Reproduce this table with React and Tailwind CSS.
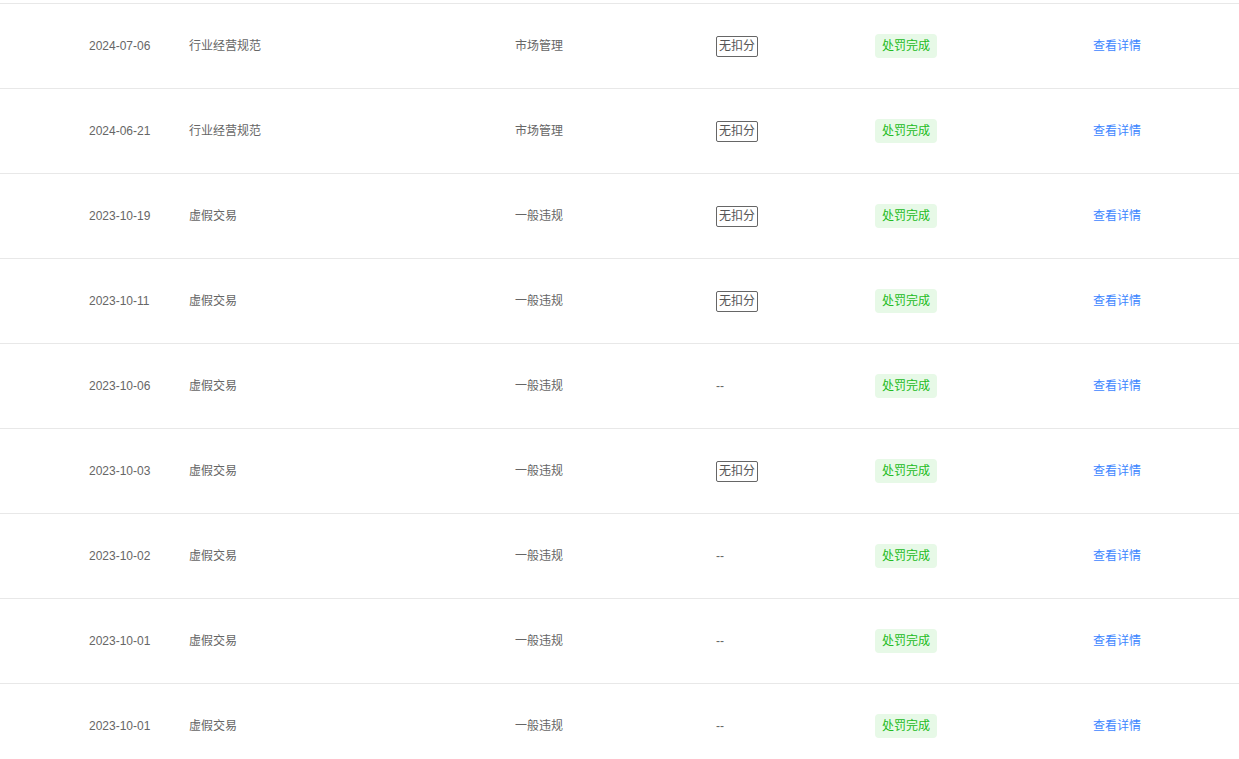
const rows = [
  { date: "2024-07-06", type: "行业经营规范", cat: "市场管理", deduct: true },
  { date: "2024-06-21", type: "行业经营规范", cat: "市场管理", deduct: true },
  { date: "2023-10-19", type: "虚假交易", cat: "一般违规", deduct: true },
  { date: "2023-10-11", type: "虚假交易", cat: "一般违规", deduct: true },
  { date: "2023-10-06", type: "虚假交易", cat: "一般违规", deduct: false },
  { date: "2023-10-03", type: "虚假交易", cat: "一般违规", deduct: true },
  { date: "2023-10-02", type: "虚假交易", cat: "一般违规", deduct: false },
  { date: "2023-10-01", type: "虚假交易", cat: "一般违规", deduct: false },
  { date: "2023-10-01", type: "虚假交易", cat: "一般违规", deduct: false },
];

export default function App() {
  return (
    <div
      className="h-[759px] overflow-hidden bg-white text-[12px] text-[#666]"
      style={{ fontFamily: '"Liberation Sans", "Noto Sans CJK SC", sans-serif' }}
    >
      <div className="h-[3px]" />
      {rows.map((r, i) => (
        <div
          key={i}
          className="grid h-[85px] grid-cols-[100px_326px_201px_159px_218px_1fr] items-center border-t border-[#e8e8e8] pl-[89px]"
        >
          <div>{r.date}</div>
          <div>{r.type}</div>
          <div>{r.cat}</div>
          <div>
            {r.deduct ? (
              <span className="inline-block rounded-[2px] border border-[#666] px-[2px] leading-[19px] text-[#555]">
                无扣分
              </span>
            ) : (
              <span>--</span>
            )}
          </div>
          <div>
            <span className="inline-block rounded-[4px] bg-[#e7f9e7] px-[7px] leading-[24px] text-[#22bb22]">
              处罚完成
            </span>
          </div>
          <div>
            <span className="text-[#3d86ff]">查看详情</span>
          </div>
        </div>
      ))}
    </div>
  );
}
